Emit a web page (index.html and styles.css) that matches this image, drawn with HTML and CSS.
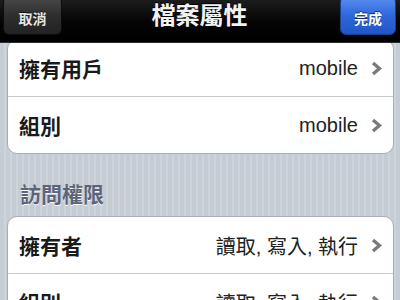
FILE: index.html
```html
<!DOCTYPE html>
<html lang="zh-Hant">
<head>
<meta charset="utf-8">
<title>檔案屬性</title>
<link rel="stylesheet" href="styles.css">
</head>
<body>
<div class="screen">
  <header class="nav">
    <button class="btn btn-cancel">取消</button>
    <h1 class="title">檔案屬性</h1>
    <button class="btn btn-done">完成</button>
  </header>
  <main class="viewport">
    <div class="content">
      <section class="group">
        <div class="row">
          <span class="label">擁有用戶</span>
          <span class="value">mobile</span>
          <svg class="chev" width="11" height="15" viewBox="0 0 11 15"><polyline points="2,2 8.5,7.5 2,13"/></svg>
        </div>
        <div class="row">
          <span class="label">組別</span>
          <span class="value">mobile</span>
          <svg class="chev" width="11" height="15" viewBox="0 0 11 15"><polyline points="2,2 8.5,7.5 2,13"/></svg>
        </div>
      </section>
      <h2 class="section-header">訪問權限</h2>
      <section class="group">
        <div class="row">
          <span class="label">擁有者</span>
          <span class="value">讀取, 寫入, 執行</span>
          <svg class="chev" width="11" height="15" viewBox="0 0 11 15"><polyline points="2,2 8.5,7.5 2,13"/></svg>
        </div>
        <div class="row">
          <span class="label">組別</span>
          <span class="value">讀取, 寫入, 執行</span>
          <svg class="chev" width="11" height="15" viewBox="0 0 11 15"><polyline points="2,2 8.5,7.5 2,13"/></svg>
        </div>
      </section>
    </div>
  </main>
</div>
</body>
</html>
```
FILE: styles.css
```css
* { box-sizing: border-box; }
html, body { margin: 0; padding: 0; }
body {
  width: 400px;
  height: 300px;
  overflow: hidden;
  font-family: "Liberation Sans", "Noto Sans CJK TC", sans-serif;
}
.screen {
  width: 400px;
  height: 300px;
  display: flex;
  flex-direction: column;
}
.nav {
  height: 43px;
  flex: none;
  display: grid;
  grid-template-columns: 1fr auto 1fr;
  align-items: start;
  padding: 0 4px 0 3px;
  background: linear-gradient(#1c1c1c, #050505 50%, #000);
  border-bottom: 1px solid #2a2a2a;
}
.btn {
  font-family: "Liberation Sans", "Noto Sans CJK TC", sans-serif;
  font-size: 14px;
  font-weight: 700;
  height: 39px;
  margin-top: -4px;
  padding: 4px 0 0;
  border-radius: 6px;
  border: 1px solid #0c0c0c;
  color: #e6e6e6;
  text-shadow: 0 -1px 0 rgba(0,0,0,0.6);
}
.btn-cancel {
  width: 59px;
  justify-self: start;
  background: linear-gradient(#4a4a4a, #2e2e2e 50%, #222);
}
.btn-done {
  width: 56px;
  justify-self: end;
  color: #fff;
  background: linear-gradient(#5a8ff0, #2f67dc 50%, #2155c6);
  border-color: #1a3f8a;
}
.title {
  margin: 0;
  padding-top: 2px;
  font-size: 24px;
  line-height: 28px;
  font-weight: 700;
  color: #f2f2f2;
  text-shadow: 0 -1px 0 #000;
}
.viewport {
  flex: 1;
  overflow: hidden;
  background: repeating-linear-gradient(90deg, #c5ccd4 0 4px, #ced4db 4px 6px);
}
.content {
  margin-top: -4px;
  padding: 0 6px 0 7px;
}
.group {
  background: #fff;
  border: 1px solid #a9aeb6;
  border-radius: 10px;
  overflow: hidden;
}
.row {
  height: 57px;
  display: flex;
  align-items: center;
  padding: 0 11px 0 11px;
  border-bottom: 1px solid #c6c8cb;
}
.row:last-child { border-bottom: none; height: 56px; }
.label {
  flex: 1;
  font-size: 21px;
  font-weight: 700;
  color: #1a1a1a;
}
.value {
  font-size: 20px;
  color: #222;
  margin-right: 13px;
}
.chev {
  flex: none;
  fill: none;
  stroke: #7a7a7a;
  stroke-width: 3.4;
  stroke-linecap: butt;
  stroke-linejoin: miter;
}
.section-header {
  margin: 28px 0 9px;
  padding-left: 13px;
  font-size: 21px;
  line-height: 25px;
  font-weight: 700;
  color: #5b6479;
  text-shadow: 0 1px 0 #fff;
}
```
